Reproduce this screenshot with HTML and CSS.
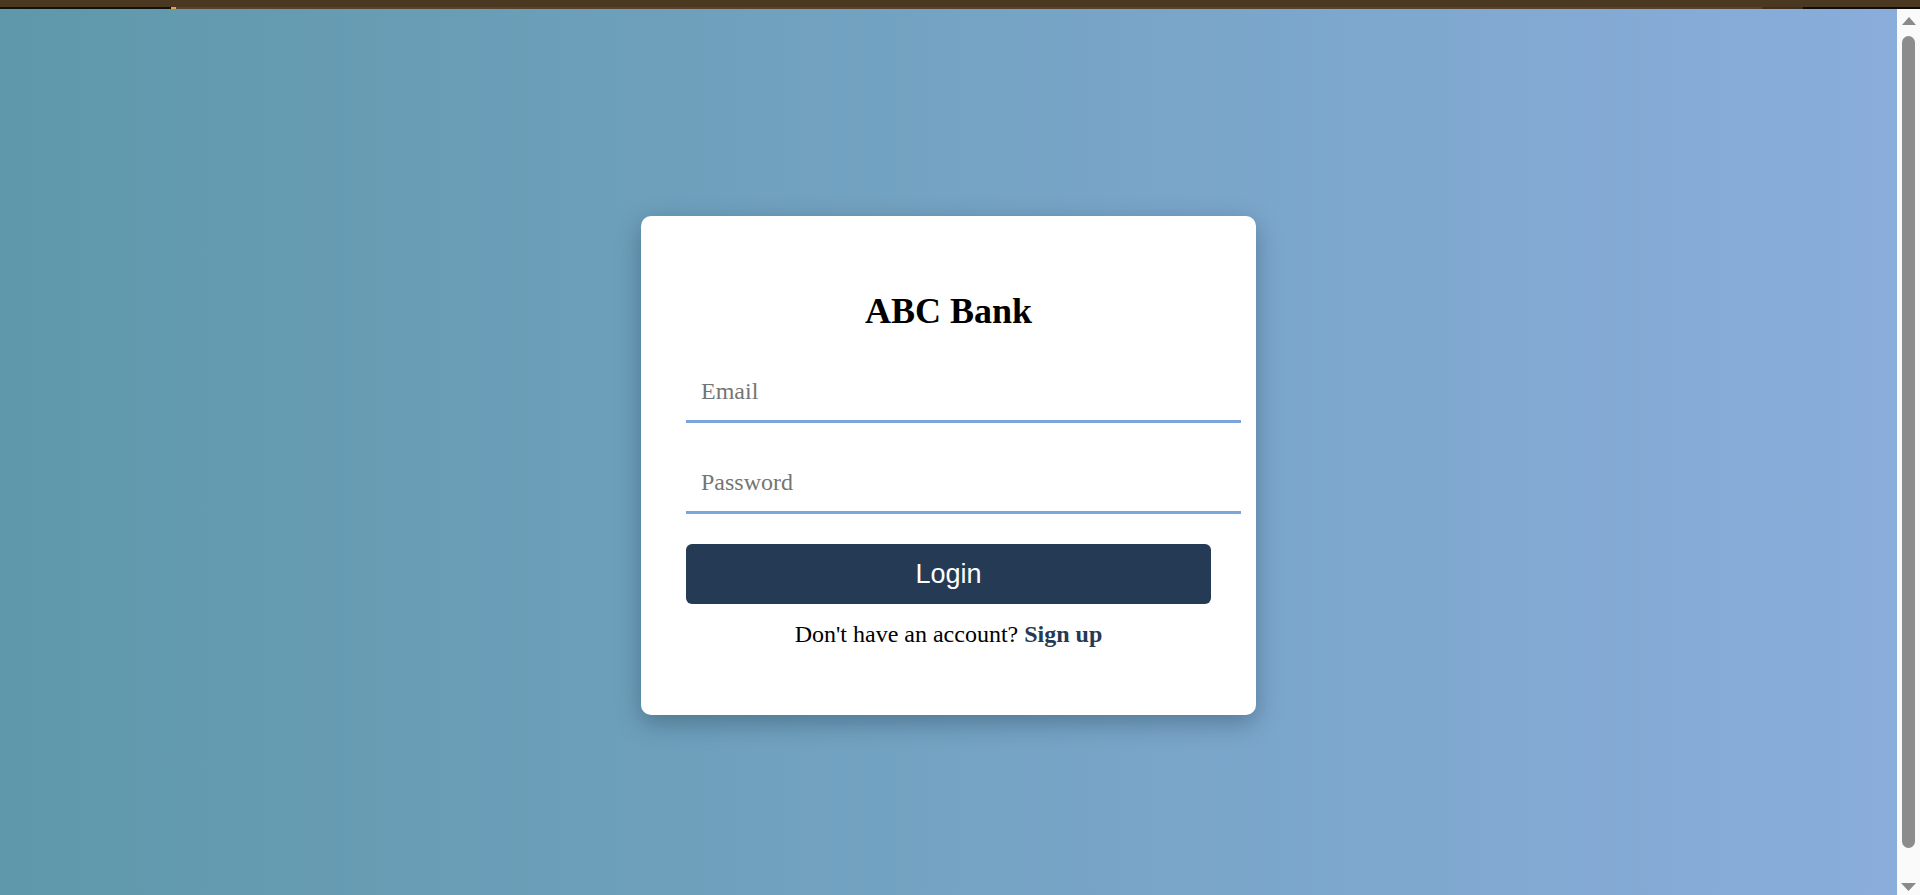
FILE: index.html
```html
<!DOCTYPE html>
<html lang="en">
<head>
<meta charset="utf-8">
<title>ABC Bank - Login</title>
<link rel="stylesheet" href="styles.css">
</head>
<body>
  <div class="topbar"></div>
  <div class="topline">
    <span class="seg seg-black-left"></span>
    <span class="seg seg-orange"></span>
    <span class="seg seg-mid"></span>
    <span class="seg seg-dark"></span>
    <span class="seg seg-black-right"></span>
  </div>
  <div class="viewport">
    <main class="page">
      <form class="card">
        <h2 class="title">ABC Bank</h2>
        <input class="field field-email" type="email" placeholder="Email">
        <input class="field field-password" type="password" placeholder="Password">
        <button class="login-btn" type="button">Login</button>
        <p class="signup">Don't have an account? <a class="signup-link" href="#">Sign up</a></p>
      </form>
    </main>
    <div class="scrollbar">
      <svg class="arrow arrow-up" width="14" height="8" viewBox="0 0 14 8"><polygon points="7,0 14,8 0,8" fill="#8a8a8a"/></svg>
      <div class="thumb"></div>
      <svg class="arrow arrow-down" width="15" height="8" viewBox="0 0 15 8"><polygon points="0,0 15,0 7.5,8" fill="#8a8a8a"/></svg>
    </div>
  </div>
</body>
</html>
```

FILE: styles.css
```css
html, body {
  margin: 0;
  padding: 0;
  height: 100%;
}

body {
  display: flex;
  flex-direction: column;
  overflow: hidden;
  font-family: "Liberation Serif", "Times New Roman", serif;
}

.topbar {
  height: 7px;
  background: #4b3820;
  flex: none;
}

.topline {
  height: 2px;
  display: flex;
  flex: none;
  background: #574330;
}

.seg { display: block; height: 100%; }
.seg-black-left { width: 171px; background: #111; }
.seg-orange { width: 5px; background: #e2a24a; }
.seg-mid { flex: 1; background: #574330; }
.seg-dark { width: 41px; background: #3e2f20; }
.seg-black-right { width: 117px; background: #0d0d0d; }

.viewport {
  flex: 1;
  display: flex;
  min-height: 0;
}

.page {
  flex: 1;
  display: flex;
  justify-content: center;
  align-items: flex-start;
  padding-top: 207px;
  background: linear-gradient(to right, #5f98aa 0%, #74a3c3 50%, #8aaddb 100%);
}

.card {
  width: 615px;
  box-sizing: border-box;
  padding: 75px 45px 67px;
  background: #fff;
  border-radius: 10px;
  box-shadow: 0 8px 24px rgba(20, 40, 60, 0.35);
  display: flex;
  flex-direction: column;
  align-items: flex-start;
}

.title {
  align-self: stretch;
  margin: 0 0 25px;
  font-size: 36px;
  line-height: 40px;
  font-weight: bold;
  text-align: center;
  color: #000;
}

.field {
  box-sizing: content-box;
  width: 100%;
  height: 28px;
  padding: 21px 15px 15px;
  margin: 0;
  border: 0;
  border-bottom: 3px solid #7aa6dc;
  background: #fff;
  font-family: "Liberation Serif", "Times New Roman", serif;
  font-size: 24px;
  line-height: 28px;
  color: #222;
  outline: none;
}

.field::placeholder {
  color: #757575;
}

.field-password {
  margin-top: 24px;
}

.login-btn {
  margin-top: 30px;
  width: 100%;
  height: 60px;
  border: 0;
  border-radius: 6px;
  background: #253a55;
  color: #fff;
  font-family: "Liberation Sans", Arial, sans-serif;
  font-size: 27px;
  cursor: pointer;
}

.signup {
  align-self: stretch;
  margin: 16px 0 0;
  font-size: 24px;
  line-height: 28px;
  text-align: center;
  color: #000;
}

.signup-link {
  color: #253a55;
  font-weight: bold;
  text-decoration: none;
}

.scrollbar {
  width: 23px;
  flex: none;
  background: #fafafa;
  display: flex;
  flex-direction: column;
  align-items: center;
  padding-top: 8px;
  box-sizing: border-box;
}

.arrow { display: block; flex: none; }

.thumb {
  margin-top: 11px;
  width: 13px;
  height: 812px;
  border-radius: 7px;
  background: #8c8c8c;
  flex: none;
}

.arrow-down {
  margin-top: 35px;
}
```
